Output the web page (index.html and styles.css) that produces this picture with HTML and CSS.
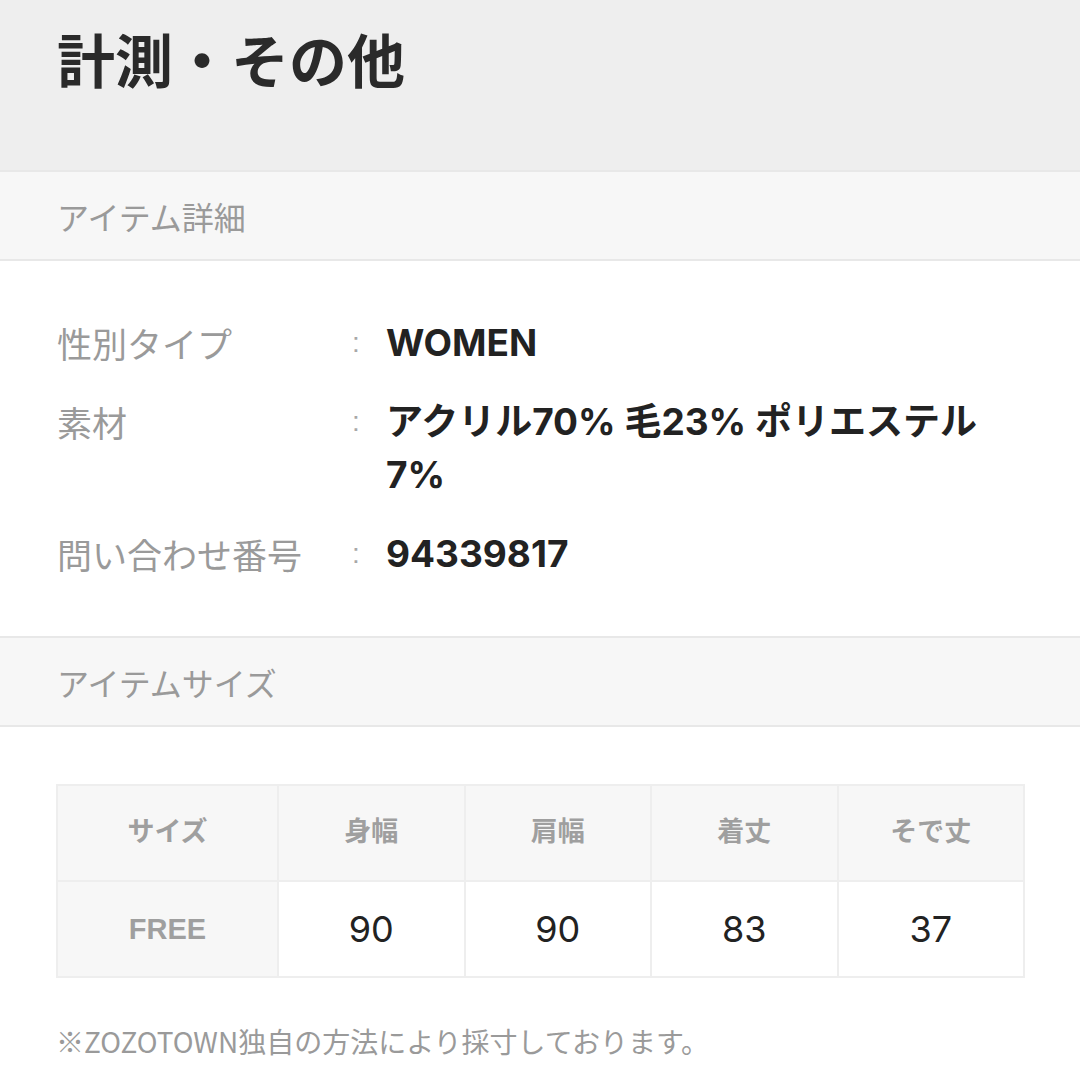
FILE: index.html
```html
<!DOCTYPE html>
<html lang="ja">
<head>
<meta charset="utf-8">
<link rel="stylesheet" href="styles.css">
</head>
<body>
<div class="page">
  <header class="title-bar">
    <h1 class="title">計測・その他</h1>
  </header>
  <div class="section-head">アイテム詳細</div>
  <dl class="details">
    <div class="row">
      <dt class="label">性別タイプ</dt>
      <dd class="colon">:</dd>
      <dd class="value">WOMEN</dd>
    </div>
    <div class="row">
      <dt class="label">素材</dt>
      <dd class="colon">:</dd>
      <dd class="value">アクリル70% 毛23% ポリエステル<br>7%</dd>
    </div>
    <div class="row">
      <dt class="label">問い合わせ番号</dt>
      <dd class="colon">:</dd>
      <dd class="value">94339817</dd>
    </div>
  </dl>
  <div class="section-head">アイテムサイズ</div>
  <div class="size-wrap">
    <table class="size-table">
      <colgroup>
        <col class="c-first"><col><col><col><col>
      </colgroup>
      <thead>
        <tr>
          <th>サイズ</th><th>身幅</th><th>肩幅</th><th>着丈</th><th>そで丈</th>
        </tr>
      </thead>
      <tbody>
        <tr>
          <th class="size-name">FREE</th><td>90</td><td>90</td><td>83</td><td>37</td>
        </tr>
      </tbody>
    </table>
    <p class="note">※ZOZOTOWN独自の方法により採寸しております。</p>
  </div>
</div>
</body>
</html>
```

FILE: styles.css
```css
* { box-sizing: border-box; }
html, body { margin: 0; padding: 0; background: #ffffff; }
body {
  font-family: "Liberation Sans", "Noto Sans CJK JP", sans-serif;
  color: #222;
  width: 1080px;
  height: 1080px;
  overflow: hidden;
}
.title-bar {
  background: #eeeeee;
  height: 170px;
  padding: 22px 57px 0;
}
.title {
  margin: 0;
  font-family: "Noto Sans CJK JP", sans-serif;
  font-size: 58px;
  font-weight: 700;
  line-height: 72px;
  color: #2a2a2a;
}
.section-head {
  background: #f7f7f7;
  border-top: 2px solid #e8e8e8;
  border-bottom: 2px solid #e8e8e8;
  height: 91px;
  display: flex;
  align-items: center;
  padding: 0 57px;
  font-family: "Noto Sans CJK JP", sans-serif;
  font-size: 32px;
  color: #9a9a9a;
}
.details {
  margin: 0;
  padding: 55px 57px 56px;
  display: flex;
  flex-direction: column;
  gap: 26px;
}
.row {
  display: flex;
  align-items: flex-start;
  line-height: 53px;
}
.label {
  width: 290px;
  font-family: "Noto Sans CJK JP", sans-serif;
  font-size: 35px;
  color: #9a9a9a;
}
.colon {
  margin: 0;
  width: 39px;
  font-size: 28px;
  color: #a8a8a8;
  padding-left: 5px;
}
.value {
  margin: 0;
  font-family: "Inter", "Noto Sans CJK JP", sans-serif;
  font-size: 37px;
  font-weight: 700;
  color: #222;
}
.size-wrap {
  padding: 57px 56px 0;
}
.size-table {
  width: 969px;
  border-collapse: collapse;
  table-layout: fixed;
  border: 2px solid #eeeeee;
}
.c-first { width: 221px; }
.size-table th,
.size-table td {
  border: 2px solid #eeeeee;
  text-align: center;
  height: 96px;
  padding: 0;
}
.size-table thead th {
  background: #f7f7f7;
  font-family: "Noto Sans CJK JP", sans-serif;
  font-size: 27px;
  font-weight: 700;
  color: #9f9f9f;
  padding-bottom: 8px;
}
.size-table .size-name {
  background: #f7f7f7;
  font-size: 29px;
  font-weight: 700;
  color: #9f9f9f;
}
.size-table td {
  background: #ffffff;
  font-family: "Inter", sans-serif;
  font-size: 36px;
  color: #222;
}
.note {
  margin: 43px 0 0;
  font-family: "Noto Sans CJK JP", sans-serif;
  font-size: 28px;
  color: #9a9a9a;
  line-height: 40px;
}
```
